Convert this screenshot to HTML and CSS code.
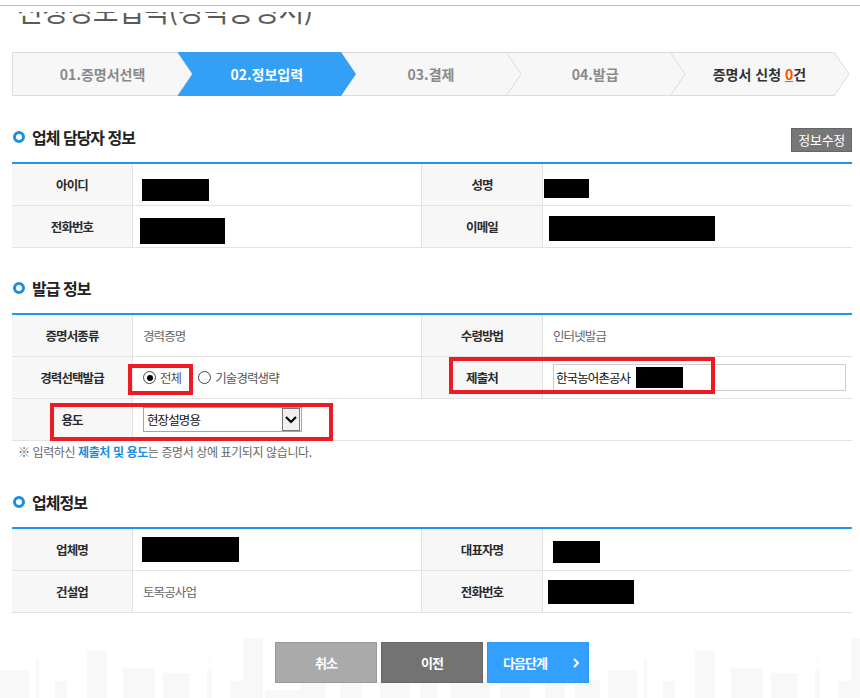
FILE: index.html
```html
<!DOCTYPE html>
<html lang="ko">
<head>
    <meta charset="UTF-8">
    <meta name="viewport" content="width=device-width, initial-scale=1.0">
    <title>신청정보입력(경력증명서)</title>
    <link rel="stylesheet" href="styles.css">
</head>
<body>

<!-- Top line + cut off title -->
<div class="topbar"></div>
<div class="title-clip">
    <h1 class="title">신청정보입력(경력증명서)</h1>
</div>

<div class="wrap">
    <!-- Steps -->
    <ol class="steps">
        <li class="step">01.증명서선택
            <svg class="arr" viewBox="0 0 15 44"><polygon points="0,0 15,22 0,44" fill="#f7f7f7"/><polyline points="0,0 15,22 0,44" fill="none" stroke="#dcdcdc"/></svg>
        </li>
        <li class="step on">02.정보입력
            <svg class="arr" viewBox="0 0 15 44"><polygon points="0,0 15,22 0,44" fill="#33a0f5"/></svg>
        </li>
        <li class="step">03.결제
            <svg class="arr" viewBox="0 0 15 44"><polygon points="0,0 15,22 0,44" fill="#f7f7f7"/><polyline points="0,0 15,22 0,44" fill="none" stroke="#dcdcdc"/></svg>
        </li>
        <li class="step">04.발급
            <svg class="arr" viewBox="0 0 15 44"><polygon points="0,0 15,22 0,44" fill="#f7f7f7"/><polyline points="0,0 15,22 0,44" fill="none" stroke="#dcdcdc"/></svg>
        </li>
        <li class="step step-cart">증명서 신청&nbsp;<em class="cnt">0</em>건
            <svg class="arr" viewBox="0 0 15 44"><polygon points="0,0 15,22 0,44" fill="#f7f7f7"/><polyline points="0,0 15,22 0,44" fill="none" stroke="#dcdcdc"/></svg>
        </li>
    </ol>

    <!-- 업체 담당자 정보 -->
    <div class="sec-head">
        <h3 class="sec-title"><span class="bullet"></span>업체 담당자 정보</h3>
        <button class="btn-edit">정보수정</button>
    </div>
    <div class="info">
        <div class="th">아이디</div>
        <div class="td"><span class="mask m-id"></span></div>
        <div class="th">성명</div>
        <div class="td last"><span class="mask m-name"></span></div>
        <div class="th">전화번호</div>
        <div class="td"><span class="mask m-tel"></span></div>
        <div class="th">이메일</div>
        <div class="td last"><span class="mask m-mail"></span></div>
    </div>

    <!-- 발급 정보 -->
    <div class="sec-head sec-2">
        <h3 class="sec-title"><span class="bullet"></span>발급 정보</h3>
    </div>
    <div class="info info-issue">
        <div class="th">증명서종류</div>
        <div class="td">경력증명</div>
        <div class="th">수령방법</div>
        <div class="td last">인터넷발급</div>

        <div class="th">경력선택발급</div>
        <div class="td">
            <label class="radio-item"><span class="radio checked"></span>전체</label>
            <label class="radio-item"><span class="radio"></span>기술경력생략</label>
        </div>
        <div class="th">제출처</div>
        <div class="td last">
            <div class="text-input">한국농어촌공사<span class="mask m-org"></span></div>
        </div>

        <div class="th">용도</div>
        <div class="td wide">
            <div class="select-box">현장설명용
                <span class="select-btn"><svg viewBox="0 0 16 21"><polyline points="3,8 8,13 13,8" fill="none" stroke="#000" stroke-width="2.2"/></svg></span>
            </div>
        </div>

        <!-- red marks drawn over the capture -->
        <div class="mark mark-radio"></div>
        <div class="mark mark-org"></div>
        <div class="mark mark-use"></div>
    </div>
    <p class="note">※ 입력하신 <b>제출처 및 용도</b>는 증명서 상에 표기되지 않습니다.</p>

    <!-- 업체정보 -->
    <div class="sec-head sec-3">
        <h3 class="sec-title"><span class="bullet"></span>업체정보</h3>
    </div>
    <div class="info">
        <div class="th">업체명</div>
        <div class="td"><span class="mask m-corp"></span></div>
        <div class="th">대표자명</div>
        <div class="td last"><span class="mask m-ceo"></span></div>
        <div class="th">건설업</div>
        <div class="td">토목공사업</div>
        <div class="th">전화번호</div>
        <div class="td last"><span class="mask m-ctel"></span></div>
    </div>

    <!-- Buttons -->
    <div class="btns">
        <button class="btn btn-cancel">취소</button>
        <button class="btn btn-prev">이전</button>
        <button class="btn btn-next">다음단계
            <svg class="btn-arr" viewBox="0 0 6 10"><polyline points="1,1 5,5 1,9" fill="none" stroke="#fff" stroke-width="2"/></svg>
        </button>
    </div>
</div>

<!-- skyline background -->
<svg class="city" viewBox="0 0 860 60" preserveAspectRatio="none">
    <defs>
        <g id="town">
            <rect x="0" y="32" width="30" height="28"/>
            <rect x="36" y="22" width="3" height="38"/>
            <rect x="55" y="43" width="12" height="17"/>
            <rect x="87" y="13" width="20" height="47"/>
            <rect x="123" y="30" width="32" height="30"/>
            <rect x="163" y="35" width="27" height="25"/>
            <rect x="207" y="32" width="5" height="28"/>
            <rect x="209" y="18" width="1" height="14"/>
            <rect x="230" y="43" width="13" height="17"/>
            <rect x="243" y="0" width="20" height="60"/>
            <rect x="265" y="52" width="35" height="8"/>
            <rect x="300" y="40" width="26" height="20"/>
            <rect x="340" y="28" width="22" height="32"/>
            <rect x="380" y="44" width="30" height="16"/>
            <rect x="420" y="20" width="18" height="40"/>
            <rect x="450" y="36" width="40" height="24"/>
            <rect x="500" y="48" width="30" height="12"/>
            <rect x="545" y="26" width="20" height="34"/>
            <rect x="575" y="42" width="25" height="18"/>
        </g>
    </defs>
    <use href="#town" x="0" y="0"/>
    <use href="#town" x="608" y="0"/>
</svg>

</body>
</html>
```

FILE: styles.css
```css
/* Basic reset */
* {
    margin: 0;
    padding: 0;
    box-sizing: border-box;
}
body {
    position: relative;
    min-height: 698px;
    overflow: hidden;
    font-family: "Noto Sans CJK KR", "Noto Sans", sans-serif;
    font-size: 12px;
    color: #333;
    background-color: #fff;
}

/* Top line and title */
.topbar {
    height: 6px;
    border-bottom: 1px solid #bbb;
}
.title-clip {
    height: 17px;
    margin-top: 6px;
    padding-left: 17px;
    overflow: hidden;
}
.title {
    margin-top: -16px;
    font-size: 28px;
    font-weight: 400;
    line-height: 28px;
    color: #5a5a5a;
    letter-spacing: -0.5px;
}

/* Content */
.wrap {
    position: relative;
    z-index: 1;
    width: 840px;
    margin-left: 12px;
}

/* Steps */
.steps {
    display: flex;
    width: 822px;
    margin-top: 23px;
    list-style: none;
}
.step {
    position: relative;
    flex: 1;
    display: flex;
    align-items: center;
    justify-content: center;
    height: 44px;
    padding-left: 15px;
    border-top: 1px solid #dcdcdc;
    border-bottom: 1px solid #dcdcdc;
    background-color: #f7f7f7;
    font-size: 14px;
    font-weight: 700;
    color: #8a8a8a;
    white-space: nowrap;
}
.step:first-child {
    border-left: 1px solid #dcdcdc;
}
.step.on {
    background-color: #33a0f5;
    border-color: #33a0f5;
    color: #fff;
}
.step-cart {
    color: #333;
}
.step .cnt {
    font-style: normal;
    color: #ff4e00;
    text-decoration: underline;
}
.step .arr {
    position: absolute;
    top: -1px;
    right: -15px;
    width: 15px;
    height: 44px;
    z-index: 1;
}

/* Section heading */
.sec-head {
    display: flex;
    align-items: center;
    justify-content: space-between;
    height: 24px;
    margin: 32px 0 10px;
}
.sec-2 {
    margin-top: 31px;
}
.sec-3 {
    margin-top: 33px;
}
.sec-title {
    display: flex;
    align-items: center;
    margin-bottom: 6px;
    font-size: 16px;
    font-weight: 700;
    line-height: 20px;
    color: #222;
    letter-spacing: -1px;
}
.bullet {
    width: 12px;
    height: 12px;
    margin: 0 7px 0 1px;
    border: 3.5px solid #1b8ee0;
    border-radius: 50%;
}
.btn-edit {
    height: 24px;
    padding: 0 6px;
    border: 1px solid #666;
    background-color: #777;
    font-family: inherit;
    font-size: 13px;
    line-height: 22px;
    color: #fff;
    letter-spacing: -0.3px;
}

/* Info tables */
.info {
    position: relative;
    display: grid;
    grid-template-columns: 121px 289px 121px 1fr;
    border-top: 2px solid #1e97e6;
}
.info .th,
.info .td {
    display: flex;
    align-items: center;
    height: 42px;
    border-right: 1px solid #e2e2e2;
    border-bottom: 1px solid #e2e2e2;
    font-size: 12.5px;
    letter-spacing: -0.9px;
}
.info .th {
    justify-content: center;
    background-color: #f7f7f7;
    font-weight: 700;
    color: #2b2b2b;
}
.info .td {
    padding-left: 10px;
    color: #666;
}
.info .td.last,
.info .td.wide {
    border-right: none;
}
.info .td.wide {
    grid-column: span 3;
}

/* Redacted values */
.mask {
    display: inline-block;
    background-color: #000;
}
.m-id   { width: 67px;  height: 22px; margin: 10px 0 0 -1px; }
.m-name { width: 45px;  height: 19px; margin: 7px 0 0 -9px; }
.m-tel  { width: 85px;  height: 26px; margin: 9px 0 0 -3px; }
.m-mail { width: 166px; height: 25px; margin: 4px 0 0 -4px; }
.m-corp { width: 97px;  height: 25px; margin-left: -1px; }
.m-ceo  { width: 47px;  height: 22px; margin-top: 4px; }
.m-ctel { width: 86px;  height: 24px; margin-left: -5px; }
.m-org  { width: 47px;  height: 21px; margin-left: 6px; }

/* Form controls */
.radio-item {
    display: flex;
    align-items: center;
    margin-right: 17px;
    color: #555;
}
.radio {
    display: inline-flex;
    align-items: center;
    justify-content: center;
    width: 13px;
    height: 13px;
    margin-right: 4px;
    border: 1px solid #444;
    border-radius: 50%;
    background-color: #fff;
}
.radio.checked::after {
    content: "";
    width: 6px;
    height: 6px;
    border-radius: 50%;
    background-color: #000;
}
.text-input {
    display: flex;
    align-items: center;
    width: 293px;
    height: 27px;
    padding-left: 2px;
    border: 1px solid #ccc;
    background-color: #fff;
    color: #111;
}
.select-box {
    position: relative;
    display: flex;
    align-items: center;
    width: 159px;
    height: 25px;
    padding-left: 3px;
    border: 1px solid #a5a5a5;
    background-color: #fff;
    color: #111;
}
.select-btn {
    position: absolute;
    top: 0;
    right: 1px;
    width: 18px;
    height: 23px;
    border: 1px solid #777;
    background-color: #f0f0f0;
}
.select-btn svg {
    display: block;
    width: 16px;
    height: 21px;
}

/* Red marks over the form */
.mark {
    position: absolute;
    border: 4px solid #ed1c24;
}
.mark-radio { left: 116px; top: 49px; width: 65px;  height: 31px; }
.mark-org   { left: 437px; top: 42px; width: 266px; height: 37px; }
.mark-use   { left: 38px;  top: 88px; width: 283px; height: 38px; }

.note {
    margin-top: 3px;
    padding-left: 6px;
    font-size: 12px;
    line-height: 16px;
    color: #666;
    letter-spacing: -0.4px;
}
.note b {
    color: #1b8ee0;
}

/* Bottom buttons */
.btns {
    display: flex;
    justify-content: center;
    gap: 4px;
    margin-top: 29px;
}
.btn {
    display: flex;
    align-items: center;
    justify-content: center;
    width: 102px;
    height: 41px;
    border: 1px solid;
    font-family: inherit;
    font-size: 13px;
    font-weight: 700;
    color: #fff;
    letter-spacing: -1px;
}
.btn-cancel {
    background-color: #aaa;
    border-color: #999;
}
.btn-prev {
    background-color: #737373;
    border-color: #666;
}
.btn-next {
    justify-content: flex-start;
    padding: 0 9px 0 15px;
    background-color: #33a0ff;
    border-color: #2f98f2;
}
.btn-arr {
    width: 6px;
    height: 10px;
    margin-left: auto;
}

/* Skyline */
.city {
    position: absolute;
    left: 0;
    bottom: 0;
    width: 860px;
    height: 60px;
    z-index: 0;
    fill: #f8f8f8;
}
```
